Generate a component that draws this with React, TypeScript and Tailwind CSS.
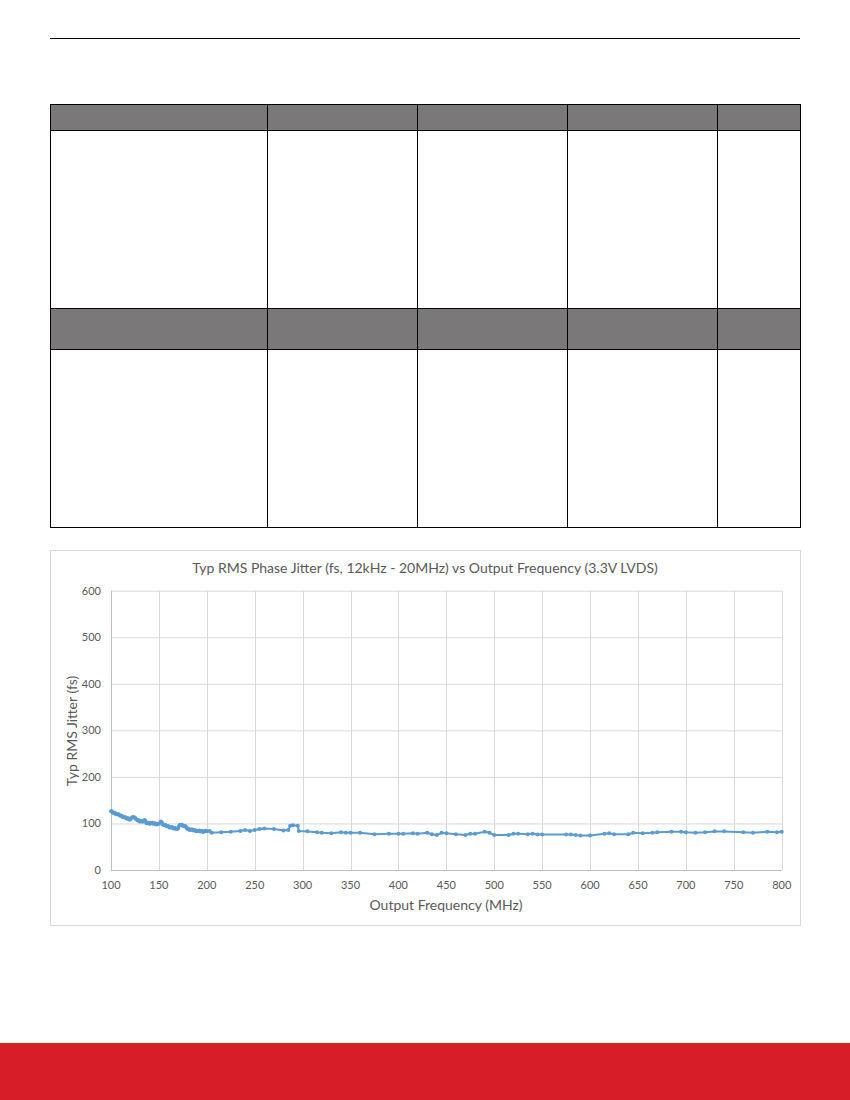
import React from "react";

const KEY: [number, number][] = [
  [100, 126], [105, 121], [110, 117], [115, 112], [120, 109], [123, 114], [126, 111], [128, 106],
  [132, 104], [135, 107], [137, 101], [145, 100], [150, 98], [152, 104], [155, 97], [160, 93],
  [165, 90], [170, 89], [172, 98], [175, 96], [178, 93], [180, 88], [185, 86], [190, 84],
  [195, 83], [200, 83], [203, 84], [205, 80], [215, 81], [225, 82], [235, 84], [240, 86],
  [245, 84], [250, 86], [255, 88], [260, 89], [270, 88], [280, 85], [285, 86], [287, 95],
  [290, 96], [295, 95], [296, 84], [305, 83], [315, 81], [320, 80], [330, 79], [340, 81],
  [345, 80], [350, 80], [360, 80], [375, 77], [390, 78], [400, 78], [405, 78], [415, 79],
  [420, 78], [430, 80], [435, 77], [440, 75], [445, 80], [450, 79], [460, 77], [470, 75],
  [475, 78], [480, 78], [490, 82], [495, 80], [500, 75], [515, 75], [520, 78], [525, 78],
  [535, 77], [540, 78], [545, 76], [550, 76], [575, 76], [580, 76], [585, 75], [590, 74],
  [600, 74], [615, 78], [620, 79], [625, 77], [640, 77], [645, 80], [655, 79], [665, 80],
  [670, 81], [685, 82], [695, 82], [700, 81], [710, 80], [720, 81], [730, 83], [740, 83],
  [760, 81], [770, 80], [785, 82], [795, 81], [800, 82],
];

function interp(f: number): number {
  for (let i = 0; i < KEY.length - 1; i++) {
    const [f0, v0] = KEY[i];
    const [f1, v1] = KEY[i + 1];
    if (f >= f0 && f <= f1) return v0 + ((v1 - v0) * (f - f0)) / (f1 - f0);
  }
  return KEY[KEY.length - 1][1];
}

const PTS: [number, number][] = (() => {
  const out: [number, number][] = [];
  for (let f = 100; f < 200; f += 1) out.push([f, interp(f) + (((f * 37) % 7) - 3) * 0.4]);
  KEY.filter(([f]) => f >= 200).forEach((p) => out.push(p));
  return out;
})();

const X0 = 60;
const X1 = 730.7;
const Y0 = 319;
const YS = 0.4655;
const px = (f: number) => X0 + ((f - 100) / 700) * (X1 - X0);
const py = (v: number) => Y0 - v * YS;

function Chart() {
  const xs = [100, 150, 200, 250, 300, 350, 400, 450, 500, 550, 600, 650, 700, 750, 800];
  const ys = [0, 100, 200, 300, 400, 500, 600];
  const path = PTS.map(([f, v], i) => `${i ? "L" : "M"}${px(f).toFixed(1)},${py(v).toFixed(1)}`).join(" ");
  return (
    <svg width="749" height="374" className="block font-['Lato',sans-serif]">
      <text x="374" y="22" textAnchor="middle" fontSize="14" fill="#595959">
        Typ RMS Phase Jitter (fs, 12kHz - 20MHz) vs Output Frequency (3.3V LVDS)
      </text>
      {ys.map((v) => (
        <g key={v}>
          <line x1={X0} x2={X1} y1={py(v) + 0.5} y2={py(v) + 0.5} stroke={v === 0 ? "#bfbfbf" : "#d9d9d9"} strokeWidth="1" />
          <text x="50" y={py(v) + 4} textAnchor="end" fontSize="11" fill="#595959">{v}</text>
        </g>
      ))}
      {xs.map((f) => (
        <g key={f}>
          <line x1={Math.round(px(f)) + 0.5} x2={Math.round(px(f)) + 0.5} y1={py(600)} y2={py(0)} stroke={f === 100 ? "#bfbfbf" : "#d9d9d9"} strokeWidth="1" />
          <text x={px(f)} y="338" textAnchor="middle" fontSize="11" fill="#595959">{f}</text>
        </g>
      ))}
      <path d={path} fill="none" stroke="#5b9bd5" strokeWidth="2" strokeLinejoin="round" />
      {PTS.map(([f, v], i) => (
        <circle key={i} cx={px(f)} cy={py(v)} r="2" fill="#5b9bd5" />
      ))}
      <text x="395" y="359" textAnchor="middle" fontSize="14" fill="#595959">Output Frequency (MHz)</text>
      <text x="0" y="0" textAnchor="middle" fontSize="14" fill="#595959" transform="translate(26,180) rotate(-90)">
        Typ RMS Jitter (fs)
      </text>
    </svg>
  );
}

function Row({ h, header }: { h: string; header?: boolean }) {
  const bg = header ? "bg-[#7a7878]" : "bg-white";
  return (
    <>
      <div className={`${h} ${bg} border-r border-b border-black`} />
      <div className={`${h} ${bg} border-r border-b border-black`} />
      <div className={`${h} ${bg} border-r border-b border-black`} />
      <div className={`${h} ${bg} border-r border-b border-black`} />
      <div className={`${h} ${bg} border-r border-b border-black`} />
    </>
  );
}

export default function App() {
  return (
    <div className="w-[850px] h-[1100px] bg-white flex flex-col font-['Lato',sans-serif]">
      <div className="h-[38px]" />
      <div className="mx-[50px] h-px bg-black" />
      <div className="h-[65px]" />
      <div className="ml-[50px] w-[751px] grid grid-cols-[217px_150px_150px_150px_83px] border-l border-t border-black">
        <Row h="h-[26px]" header />
        <Row h="h-[178px]" />
        <Row h="h-[41px]" header />
        <Row h="h-[178px]" />
      </div>
      <div className="h-[22px]" />
      <div className="ml-[50px] w-[751px] h-[376px] border border-[#d9d9d9]">
        <Chart />
      </div>
      <div className="flex-1" />
      <div className="h-[57px] bg-[#d71e28]" />
    </div>
  );
}
